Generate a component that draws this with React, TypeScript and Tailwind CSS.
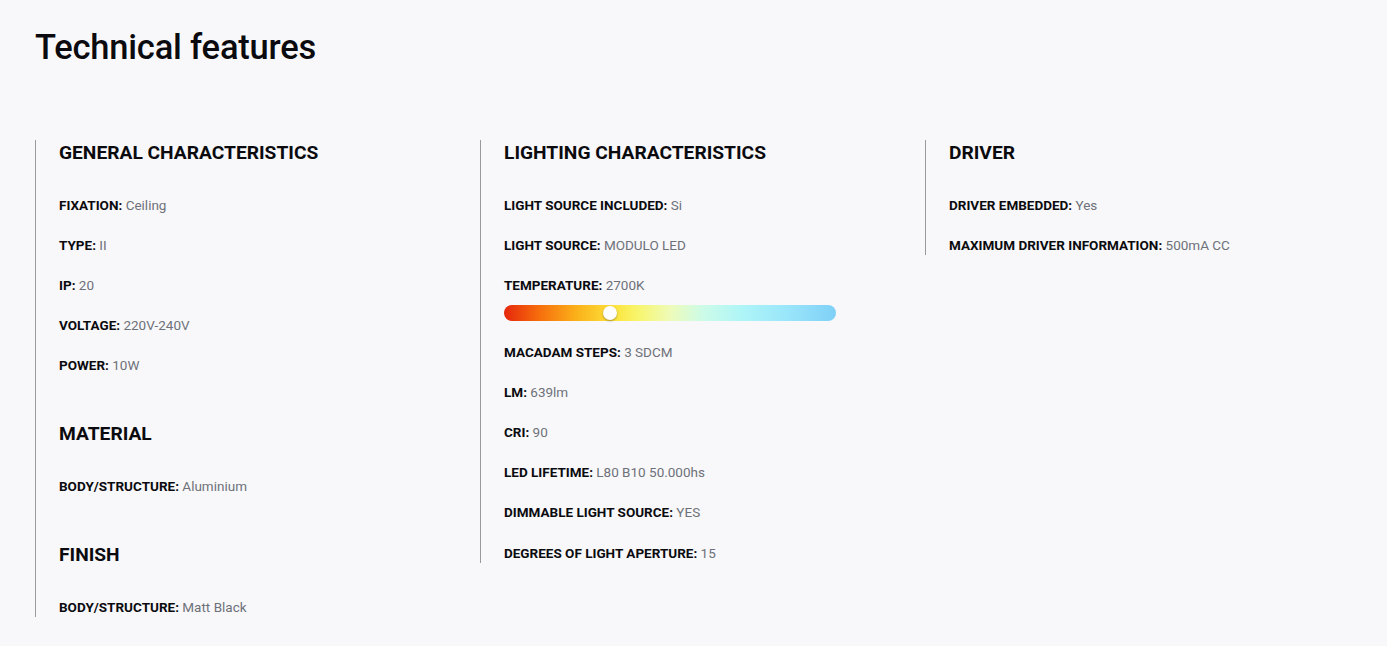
import React from "react";

type Item = { label: string; value: string; bar?: boolean };
type Section = { title: string; items: Item[] };
type Column = { gap: string; sections: Section[] };

const columns: Column[] = [
  {
    gap: "gap-[20px]",
    sections: [
      {
        title: "GENERAL CHARACTERISTICS",
        items: [
          { label: "FIXATION", value: "Ceiling" },
          { label: "TYPE", value: "II" },
          { label: "IP", value: "20" },
          { label: "VOLTAGE", value: "220V-240V" },
          { label: "POWER", value: "10W" },
        ],
      },
      { title: "MATERIAL", items: [{ label: "BODY/STRUCTURE", value: "Aluminium" }] },
      { title: "FINISH", items: [{ label: "BODY/STRUCTURE", value: "Matt Black" }] },
    ],
  },
  {
    gap: "gap-[20.2px]",
    sections: [
      {
        title: "LIGHTING CHARACTERISTICS",
        items: [
          { label: "LIGHT SOURCE INCLUDED", value: "Si" },
          { label: "LIGHT SOURCE", value: "MODULO LED" },
          { label: "TEMPERATURE", value: "2700K", bar: true },
          { label: "MACADAM STEPS", value: "3 SDCM" },
          { label: "LM", value: "639lm" },
          { label: "CRI", value: "90" },
          { label: "LED LIFETIME", value: "L80 B10 50.000hs" },
          { label: "DIMMABLE LIGHT SOURCE", value: "YES" },
          { label: "DEGREES OF LIGHT APERTURE", value: "15" },
        ],
      },
    ],
  },
  {
    gap: "gap-[20px]",
    sections: [
      {
        title: "DRIVER",
        items: [
          { label: "DRIVER EMBEDDED", value: "Yes" },
          { label: "MAXIMUM DRIVER INFORMATION", value: "500mA CC" },
        ],
      },
    ],
  },
];

function TempBar() {
  return (
    <div className="relative mt-[10px] h-[16px] w-[332px] rounded-full bg-[linear-gradient(90deg,#e5260c_0%,#f66a0c_10%,#fbb21a_22%,#fde23c_33%,#f8f56a_40%,#eefbb8_50%,#ccfbe8_60%,#aef5f8_72%,#9ae6fa_85%,#7fd0f7_100%)]">
      <div className="absolute left-[99px] top-[1px] h-[14px] w-[14px] rounded-full bg-white shadow-[0_1px_2px_rgba(0,0,0,0.35)]" />
    </div>
  );
}

export default function App() {
  return (
    <div
      className="min-h-[646px] w-full bg-[#f8f8fa] px-[35px] pt-[27px] text-[#111]"
      style={{ fontFamily: "Roboto, 'Liberation Sans', sans-serif" }}
    >
      <h1 className="text-[34.5px] font-medium leading-[40px] tracking-[-0.2px] text-[#0b0b0f]">
        Technical features
      </h1>
      <div className="mt-[73px] grid grid-cols-[445px_445px_1fr] items-start">
        {columns.map((col, ci) => (
          <div key={ci} className="flex flex-col gap-[46px] border-l border-[#9a9a9a] pl-[23px]">
            {col.sections.map((sec, si) => (
              <div key={si} className="flex flex-col">
                <h2 className="text-[19.2px] font-bold leading-[26px] text-[#0b0b0f]">{sec.title}</h2>
                <div className={`mt-[29px] flex flex-col ${col.gap}`}>
                  {sec.items.map((it, ii) => (
                    <div key={ii} className="flex flex-col">
                      <p className="text-[13.5px] leading-[20px]">
                        <span className="font-bold text-[#0b0b0f]">{it.label}:</span>{" "}
                        <span className="text-[#6e7179]">{it.value}</span>
                      </p>
                      {it.bar && <TempBar />}
                    </div>
                  ))}
                </div>
              </div>
            ))}
          </div>
        ))}
      </div>
    </div>
  );
}
